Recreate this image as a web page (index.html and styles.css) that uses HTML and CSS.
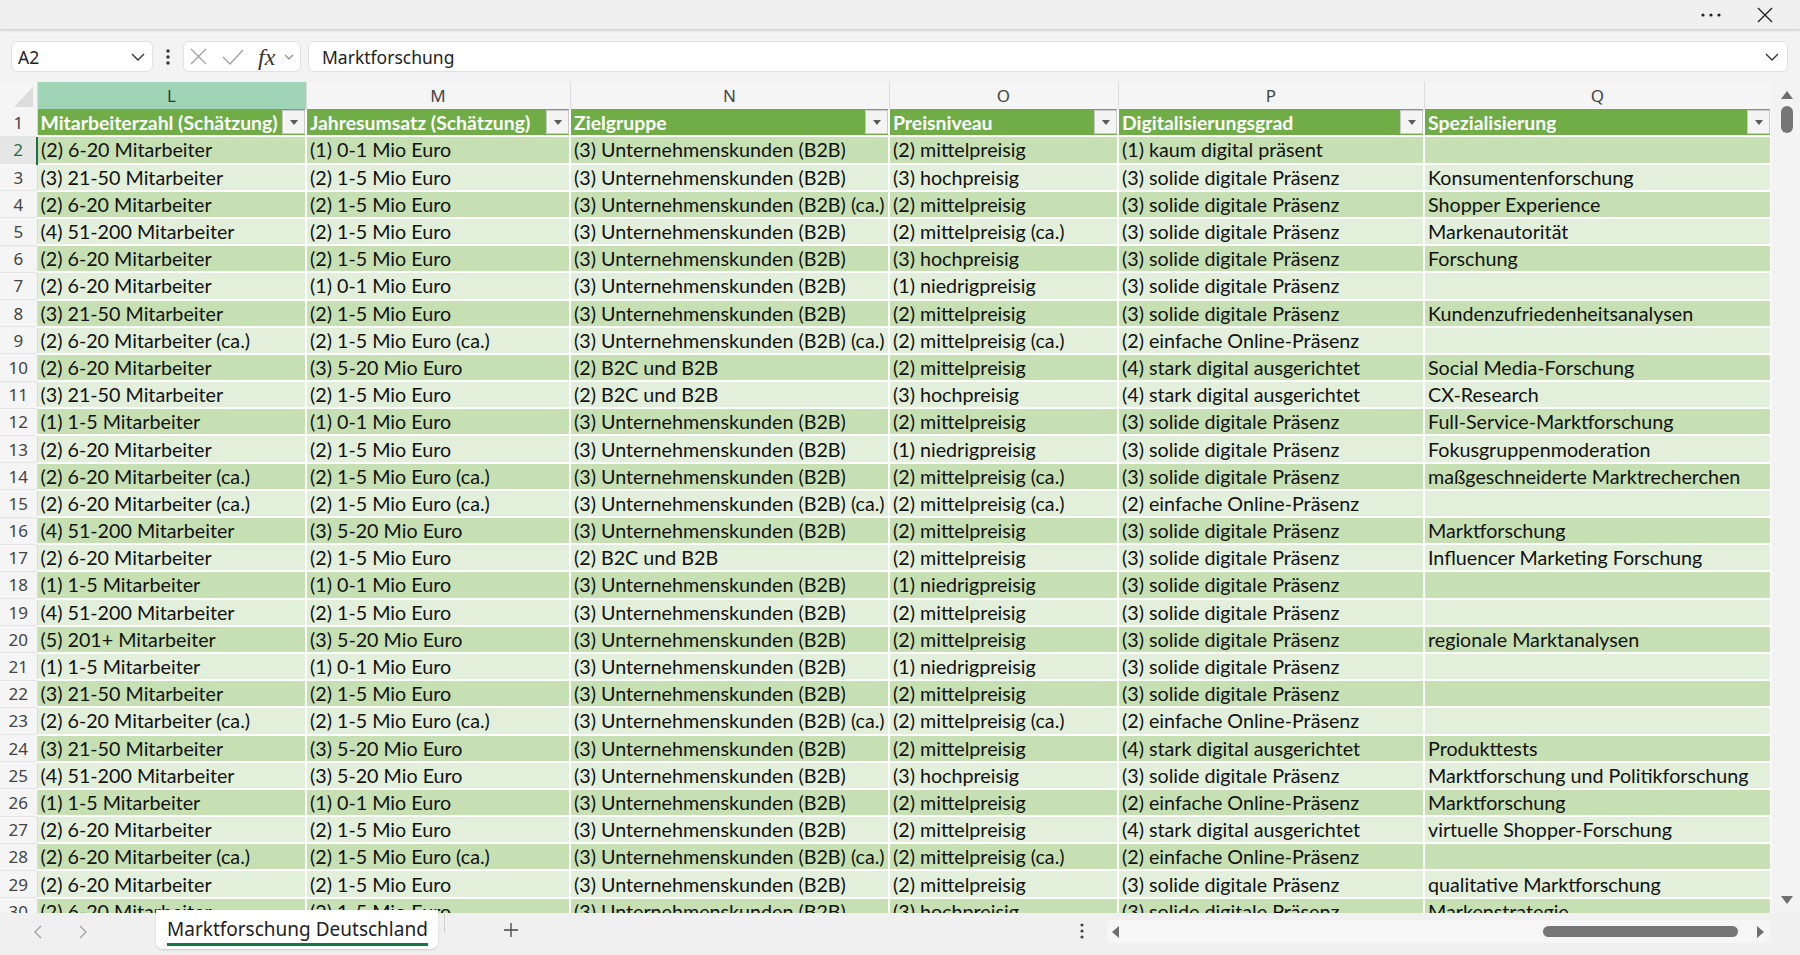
FILE: index.html
```html
<!DOCTYPE html>
<html lang="de">
<head>
    <meta charset="UTF-8">
    <meta name="viewport" content="width=device-width, initial-scale=1.0">
    <title>Marktforschung Deutschland</title>
    <link rel="stylesheet" href="styles.css">
</head>
<body>
    <div class="titlebar">
        <svg class="more" width="20" height="4" viewBox="0 0 20 4"><circle cx="2" cy="2" r="1.6" fill="#222"/><circle cx="10" cy="2" r="1.6" fill="#222"/><circle cx="18" cy="2" r="1.6" fill="#222"/></svg>
        <svg class="close" width="16" height="16" viewBox="0 0 16 16"><path d="M1 1 L15 15 M15 1 L1 15" stroke="#222" stroke-width="1.4" fill="none"/></svg>
    </div>

    <div class="formula-bar">
        <div class="name-box">
            <span>A2</span>
            <svg width="14" height="8" viewBox="0 0 14 8"><polyline points="1,1 7,7 13,1" stroke="#333" stroke-width="1.4" fill="none"/></svg>
        </div>
        <div class="grip">
            <svg width="4" height="16" viewBox="0 0 4 16"><circle cx="2" cy="2" r="1.7" fill="#333"/><circle cx="2" cy="8" r="1.7" fill="#333"/><circle cx="2" cy="14" r="1.7" fill="#333"/></svg>
        </div>
        <div class="fx-box">
            <svg class="cancel" width="17" height="17" viewBox="0 0 17 17"><path d="M1 1 L16 16 M16 1 L1 16" stroke="#a0a0a0" stroke-width="1.3" fill="none"/></svg>
            <svg class="enter" width="22" height="16" viewBox="0 0 22 16"><polyline points="1,8 8,15 21,1" stroke="#a0a0a0" stroke-width="1.3" fill="none"/></svg>
            <span class="fx">fx</span>
            <svg width="10" height="6" viewBox="0 0 10 6"><polyline points="1,1 5,5 9,1" stroke="#888" stroke-width="1.1" fill="none"/></svg>
        </div>
        <div class="formula-input">
            <span>Marktforschung</span>
            <svg width="14" height="8" viewBox="0 0 14 8"><polyline points="1,1 7,7 13,1" stroke="#333" stroke-width="1.4" fill="none"/></svg>
        </div>
    </div>

    <div class="grid-area">
        <div class="sheet-view">
            <table class="sheet">
                <colgroup>
                    <col style="width:37px">
                    <col style="width:269px">
                    <col style="width:264px">
                    <col style="width:319px">
                    <col style="width:229px">
                    <col style="width:306px">
                    <col style="width:347px">
                </colgroup>
                <thead>
                    <tr class="col-letters">
                        <th class="corner"><svg width="37" height="27" viewBox="0 0 37 27"><polygon points="33,5 33,25 14,25" fill="#dcdcdc"/></svg></th>
                        <th class="active">L</th>
                        <th>M</th>
                        <th>N</th>
                        <th>O</th>
                        <th>P</th>
                        <th>Q</th>
                    </tr>
                    <tr class="table-head">
                        <th class="rownum">1</th>
                        <th><div class="head-cell"><span>Mitarbeiterzahl (Schätzung)</span><i class="filter"></i></div></th>
                        <th><div class="head-cell"><span>Jahresumsatz (Schätzung)</span><i class="filter"></i></div></th>
                        <th><div class="head-cell"><span>Zielgruppe</span><i class="filter"></i></div></th>
                        <th><div class="head-cell"><span>Preisniveau</span><i class="filter"></i></div></th>
                        <th><div class="head-cell"><span>Digitalisierungsgrad</span><i class="filter"></i></div></th>
                        <th><div class="head-cell"><span>Spezialisierung</span><i class="filter"></i></div></th>
                    </tr>
                </thead>
                <tbody>
                    <tr><th class="rownum selected">2</th><td>(2) 6-20 Mitarbeiter</td><td>(1) 0-1 Mio Euro</td><td>(3) Unternehmenskunden (B2B)</td><td>(2) mittelpreisig</td><td>(1) kaum digital präsent</td><td></td></tr>
                    <tr><th class="rownum">3</th><td>(3) 21-50 Mitarbeiter</td><td>(2) 1-5 Mio Euro</td><td>(3) Unternehmenskunden (B2B)</td><td>(3) hochpreisig</td><td>(3) solide digitale Präsenz</td><td>Konsumentenforschung</td></tr>
                    <tr><th class="rownum">4</th><td>(2) 6-20 Mitarbeiter</td><td>(2) 1-5 Mio Euro</td><td>(3) Unternehmenskunden (B2B) (ca.)</td><td>(2) mittelpreisig</td><td>(3) solide digitale Präsenz</td><td>Shopper Experience</td></tr>
                    <tr><th class="rownum">5</th><td>(4) 51-200 Mitarbeiter</td><td>(2) 1-5 Mio Euro</td><td>(3) Unternehmenskunden (B2B)</td><td>(2) mittelpreisig (ca.)</td><td>(3) solide digitale Präsenz</td><td>Markenautorität</td></tr>
                    <tr><th class="rownum">6</th><td>(2) 6-20 Mitarbeiter</td><td>(2) 1-5 Mio Euro</td><td>(3) Unternehmenskunden (B2B)</td><td>(3) hochpreisig</td><td>(3) solide digitale Präsenz</td><td>Forschung</td></tr>
                    <tr><th class="rownum">7</th><td>(2) 6-20 Mitarbeiter</td><td>(1) 0-1 Mio Euro</td><td>(3) Unternehmenskunden (B2B)</td><td>(1) niedrigpreisig</td><td>(3) solide digitale Präsenz</td><td></td></tr>
                    <tr><th class="rownum">8</th><td>(3) 21-50 Mitarbeiter</td><td>(2) 1-5 Mio Euro</td><td>(3) Unternehmenskunden (B2B)</td><td>(2) mittelpreisig</td><td>(3) solide digitale Präsenz</td><td>Kundenzufriedenheitsanalysen</td></tr>
                    <tr><th class="rownum">9</th><td>(2) 6-20 Mitarbeiter (ca.)</td><td>(2) 1-5 Mio Euro (ca.)</td><td>(3) Unternehmenskunden (B2B) (ca.)</td><td>(2) mittelpreisig (ca.)</td><td>(2) einfache Online-Präsenz</td><td></td></tr>
                    <tr><th class="rownum">10</th><td>(2) 6-20 Mitarbeiter</td><td>(3) 5-20 Mio Euro</td><td>(2) B2C und B2B</td><td>(2) mittelpreisig</td><td>(4) stark digital ausgerichtet</td><td>Social Media-Forschung</td></tr>
                    <tr><th class="rownum">11</th><td>(3) 21-50 Mitarbeiter</td><td>(2) 1-5 Mio Euro</td><td>(2) B2C und B2B</td><td>(3) hochpreisig</td><td>(4) stark digital ausgerichtet</td><td>CX-Research</td></tr>
                    <tr><th class="rownum">12</th><td>(1) 1-5 Mitarbeiter</td><td>(1) 0-1 Mio Euro</td><td>(3) Unternehmenskunden (B2B)</td><td>(2) mittelpreisig</td><td>(3) solide digitale Präsenz</td><td>Full-Service-Marktforschung</td></tr>
                    <tr><th class="rownum">13</th><td>(2) 6-20 Mitarbeiter</td><td>(2) 1-5 Mio Euro</td><td>(3) Unternehmenskunden (B2B)</td><td>(1) niedrigpreisig</td><td>(3) solide digitale Präsenz</td><td>Fokusgruppenmoderation</td></tr>
                    <tr><th class="rownum">14</th><td>(2) 6-20 Mitarbeiter (ca.)</td><td>(2) 1-5 Mio Euro (ca.)</td><td>(3) Unternehmenskunden (B2B)</td><td>(2) mittelpreisig (ca.)</td><td>(3) solide digitale Präsenz</td><td>maßgeschneiderte Marktrecherchen</td></tr>
                    <tr><th class="rownum">15</th><td>(2) 6-20 Mitarbeiter (ca.)</td><td>(2) 1-5 Mio Euro (ca.)</td><td>(3) Unternehmenskunden (B2B) (ca.)</td><td>(2) mittelpreisig (ca.)</td><td>(2) einfache Online-Präsenz</td><td></td></tr>
                    <tr><th class="rownum">16</th><td>(4) 51-200 Mitarbeiter</td><td>(3) 5-20 Mio Euro</td><td>(3) Unternehmenskunden (B2B)</td><td>(2) mittelpreisig</td><td>(3) solide digitale Präsenz</td><td>Marktforschung</td></tr>
                    <tr><th class="rownum">17</th><td>(2) 6-20 Mitarbeiter</td><td>(2) 1-5 Mio Euro</td><td>(2) B2C und B2B</td><td>(2) mittelpreisig</td><td>(3) solide digitale Präsenz</td><td>Influencer Marketing Forschung</td></tr>
                    <tr><th class="rownum">18</th><td>(1) 1-5 Mitarbeiter</td><td>(1) 0-1 Mio Euro</td><td>(3) Unternehmenskunden (B2B)</td><td>(1) niedrigpreisig</td><td>(3) solide digitale Präsenz</td><td></td></tr>
                    <tr><th class="rownum">19</th><td>(4) 51-200 Mitarbeiter</td><td>(2) 1-5 Mio Euro</td><td>(3) Unternehmenskunden (B2B)</td><td>(2) mittelpreisig</td><td>(3) solide digitale Präsenz</td><td></td></tr>
                    <tr><th class="rownum">20</th><td>(5) 201+ Mitarbeiter</td><td>(3) 5-20 Mio Euro</td><td>(3) Unternehmenskunden (B2B)</td><td>(2) mittelpreisig</td><td>(3) solide digitale Präsenz</td><td>regionale Marktanalysen</td></tr>
                    <tr><th class="rownum">21</th><td>(1) 1-5 Mitarbeiter</td><td>(1) 0-1 Mio Euro</td><td>(3) Unternehmenskunden (B2B)</td><td>(1) niedrigpreisig</td><td>(3) solide digitale Präsenz</td><td></td></tr>
                    <tr><th class="rownum">22</th><td>(3) 21-50 Mitarbeiter</td><td>(2) 1-5 Mio Euro</td><td>(3) Unternehmenskunden (B2B)</td><td>(2) mittelpreisig</td><td>(3) solide digitale Präsenz</td><td></td></tr>
                    <tr><th class="rownum">23</th><td>(2) 6-20 Mitarbeiter (ca.)</td><td>(2) 1-5 Mio Euro (ca.)</td><td>(3) Unternehmenskunden (B2B) (ca.)</td><td>(2) mittelpreisig (ca.)</td><td>(2) einfache Online-Präsenz</td><td></td></tr>
                    <tr><th class="rownum">24</th><td>(3) 21-50 Mitarbeiter</td><td>(3) 5-20 Mio Euro</td><td>(3) Unternehmenskunden (B2B)</td><td>(2) mittelpreisig</td><td>(4) stark digital ausgerichtet</td><td>Produkttests</td></tr>
                    <tr><th class="rownum">25</th><td>(4) 51-200 Mitarbeiter</td><td>(3) 5-20 Mio Euro</td><td>(3) Unternehmenskunden (B2B)</td><td>(3) hochpreisig</td><td>(3) solide digitale Präsenz</td><td>Marktforschung und Politikforschung</td></tr>
                    <tr><th class="rownum">26</th><td>(1) 1-5 Mitarbeiter</td><td>(1) 0-1 Mio Euro</td><td>(3) Unternehmenskunden (B2B)</td><td>(2) mittelpreisig</td><td>(2) einfache Online-Präsenz</td><td>Marktforschung</td></tr>
                    <tr><th class="rownum">27</th><td>(2) 6-20 Mitarbeiter</td><td>(2) 1-5 Mio Euro</td><td>(3) Unternehmenskunden (B2B)</td><td>(2) mittelpreisig</td><td>(4) stark digital ausgerichtet</td><td>virtuelle Shopper-Forschung</td></tr>
                    <tr><th class="rownum">28</th><td>(2) 6-20 Mitarbeiter (ca.)</td><td>(2) 1-5 Mio Euro (ca.)</td><td>(3) Unternehmenskunden (B2B) (ca.)</td><td>(2) mittelpreisig (ca.)</td><td>(2) einfache Online-Präsenz</td><td></td></tr>
                    <tr><th class="rownum">29</th><td>(2) 6-20 Mitarbeiter</td><td>(2) 1-5 Mio Euro</td><td>(3) Unternehmenskunden (B2B)</td><td>(2) mittelpreisig</td><td>(3) solide digitale Präsenz</td><td>qualitative Marktforschung</td></tr>
                    <tr><th class="rownum">30</th><td>(2) 6-20 Mitarbeiter</td><td>(2) 1-5 Mio Euro</td><td>(3) Unternehmenskunden (B2B)</td><td>(3) hochpreisig</td><td>(3) solide digitale Präsenz</td><td>Markenstrategie</td></tr>
                </tbody>
            </table>
        </div>
        <div class="vscroll">
            <svg class="arrow-up" width="12" height="8" viewBox="0 0 12 8"><polygon points="6,0 12,8 0,8" fill="#6e6e6e"/></svg>
            <div class="vthumb"></div>
            <div class="spacer"></div>
            <svg class="arrow-down" width="12" height="8" viewBox="0 0 12 8"><polygon points="0,0 12,0 6,8" fill="#6e6e6e"/></svg>
        </div>
    </div>

    <div class="tab-bar">
        <div class="tab-nav">
            <svg width="8" height="14" viewBox="0 0 8 14"><polyline points="7,1 1,7 7,13" stroke="#a0a0a0" stroke-width="1.3" fill="none"/></svg>
            <svg width="8" height="14" viewBox="0 0 8 14"><polyline points="1,1 7,7 1,13" stroke="#a0a0a0" stroke-width="1.3" fill="none"/></svg>
        </div>
        <div class="sheet-tab"><span>Marktforschung Deutschland</span></div>
        <div class="tab-sep"></div>
        <svg class="add-sheet" width="16" height="16" viewBox="0 0 16 16"><path d="M8 1 V15 M1 8 H15" stroke="#444" stroke-width="1.3" fill="none"/></svg>
        <div class="tab-grip">
            <svg width="4" height="16" viewBox="0 0 4 16"><circle cx="2" cy="2" r="1.6" fill="#444"/><circle cx="2" cy="8" r="1.6" fill="#444"/><circle cx="2" cy="14" r="1.6" fill="#444"/></svg>
        </div>
        <div class="hscroll">
            <svg width="7" height="12" viewBox="0 0 7 12"><polygon points="7,0 7,12 0,6" fill="#6e6e6e"/></svg>
            <div class="hthumb"></div>
            <svg width="7" height="12" viewBox="0 0 7 12"><polygon points="0,0 7,6 0,12" fill="#6e6e6e"/></svg>
        </div>
    </div>
</body>
</html>
```
FILE: styles.css
```css
* {
    box-sizing: border-box;
}
html, body {
    margin: 0;
    padding: 0;
}
body {
    width: 1800px;
    height: 955px;
    overflow: hidden;
    display: flex;
    flex-direction: column;
    background-color: #f3f3f3;
    font-family: "Noto Sans", "Open Sans", sans-serif;
    color: #222;
}

/* window title strip */
.titlebar {
    flex: none;
    height: 29px;
    background-color: #efefef;
    box-shadow: 0 1px 3px rgba(0, 0, 0, 0.2);
    display: flex;
    justify-content: flex-end;
    align-items: center;
    gap: 36px;
    padding-right: 27px;
    position: relative;
    z-index: 2;
}

/* name box + formula input */
.formula-bar {
    flex: none;
    height: 53px;
    display: flex;
    align-items: flex-start;
    padding: 12px 12px 0 11px;
}
.name-box,
.fx-box,
.formula-input {
    height: 31px;
    background-color: #fff;
    border: 1px solid #e1e1e1;
    border-radius: 6px;
    display: flex;
    align-items: center;
}
.name-box {
    width: 142px;
    justify-content: space-between;
    padding: 0 7px 0 6px;
    font-size: 17.5px;
}
.grip {
    width: 30px;
    height: 31px;
    display: flex;
    align-items: center;
    justify-content: center;
}
.fx-box {
    width: 118px;
    padding-left: 6px;
}
.fx-box .enter {
    margin-left: 15px;
}
.fx-box .fx {
    font-family: "Liberation Serif", serif;
    font-style: italic;
    font-size: 24px;
    color: #333;
    margin-left: 14px;
    margin-right: 9px;
    line-height: 1;
}
.formula-input {
    flex: 1;
    margin-left: 7px;
    justify-content: space-between;
    padding: 0 8px 0 13px;
    font-size: 17.5px;
}

/* spreadsheet grid */
.grid-area {
    flex: none;
    height: 831px;
    display: flex;
    background-color: #fff;
}
.sheet-view {
    width: 1771px;
    height: 831px;
    overflow: hidden;
}
.sheet {
    table-layout: fixed;
    width: 1771px;
    border-collapse: collapse;
    border-spacing: 0;
}
.sheet tr {
    height: 27.2px;
}
.sheet th,
.sheet td {
    padding: 0;
    white-space: nowrap;
    overflow: hidden;
}
.col-letters th {
    background-color: #f5f5f5;
    border-right: 1px solid #dcdcdc;
    font-weight: normal;
    font-size: 17px;
    color: #444;
    text-align: center;
    height: 27px;
}
.col-letters th.corner {
    padding: 0;
    line-height: 0;
    vertical-align: top;
}
.col-letters th.active {
    background-color: #9fd5b6;
    color: #333;
}
.rownum {
    background-color: #f5f5f5;
    border-right: 1px solid #d9d9d9;
    border-bottom: 1px solid #e3e3e3;
    font-weight: normal;
    font-size: 17px;
    color: #444;
    text-align: center;
}
.rownum.selected {
    background-color: #e6e6e6;
    color: #1e7145;
    border-right: 2px solid #1e7145;
}

.table-head th:not(.rownum) {
    background-color: #70ad47;
    border-right: 2px solid #fff;
    border-bottom: 2px solid #fff;
    color: #fff;
    font-family: "Lato", "Noto Sans", sans-serif;
    font-weight: bold;
    font-size: 19.4px;
    text-align: left;
}
.head-cell {
    display: flex;
    align-items: center;
    justify-content: space-between;
    padding-left: 3px;
    padding-right: 0;
}
.head-cell span {
    overflow: hidden;
}
.filter {
    flex: none;
    width: 23px;
    height: 24px;
    background-color: #f4f4f4;
    border: 1px solid #c9c9c9;
    position: relative;
}
.filter::after {
    content: "";
    position: absolute;
    left: 7px;
    top: 9px;
    border-left: 4px solid transparent;
    border-right: 4px solid transparent;
    border-top: 5px solid #5a5a5a;
}

.sheet td {
    font-family: "Lato", "Noto Sans", sans-serif;
    font-size: 19.7px;
    color: #111;
    padding-left: 3px;
    border-right: 2px solid #fff;
    border-bottom: 2px solid #fff;
}
.sheet tbody tr:nth-child(odd) td {
    background-color: #c6e0b4;
}
.sheet tbody tr:nth-child(even) td {
    background-color: #e2efda;
}

/* vertical scrollbar */
.vscroll {
    width: 29px;
    background-color: #f3f3f3;
    display: flex;
    flex-direction: column;
    align-items: center;
    padding: 9px 0 9px 3px;
}
.vthumb {
    width: 12px;
    height: 27px;
    margin-top: 7px;
    border-radius: 6px;
    background-color: #767676;
}
.vscroll .spacer {
    flex: 1;
}

/* sheet tabs + horizontal scrollbar */
.tab-bar {
    flex: 1;
    display: flex;
    align-items: flex-start;
    background-color: #f0f0f0;
}
.tab-nav {
    width: 156px;
    display: flex;
    gap: 37px;
    padding: 2px 0 0 34px;
    height: 36px;
    align-items: center;
}
.sheet-tab {
    width: 282px;
    height: 39px;
    margin-top: -3px;
    background-color: #fff;
    border-radius: 0 0 7px 7px;
    box-shadow: 0 1px 2px rgba(0, 0, 0, 0.15);
    padding: 0 11px;
    display: flex;
    align-items: center;
}
.sheet-tab span {
    font-size: 19px;
    color: #222;
    line-height: 1;
    padding: 6px 0 4px;
    border-bottom: 3px solid #107c41;
    white-space: nowrap;
}
.tab-sep {
    width: 1px;
    height: 19px;
    margin: 0 0 0 6px;
    background-color: #cfcfcf;
    margin-top: 1px;
}
.add-sheet {
    margin: 9px 0 0 58px;
}
.tab-grip {
    margin-left: 558px;
    width: 10px;
    height: 36px;
    display: flex;
    align-items: center;
    justify-content: center;
}
.hscroll {
    margin-left: 20px;
    margin-top: 7px;
    width: 663px;
    height: 23px;
    border-radius: 6px;
    background-color: #f6f6f6;
    display: flex;
    align-items: center;
    padding: 0 6px 0 5px;
}
.hthumb {
    width: 195px;
    height: 11px;
    border-radius: 6px;
    background-color: #767676;
    margin-left: auto;
    margin-right: 19px;
}
```
